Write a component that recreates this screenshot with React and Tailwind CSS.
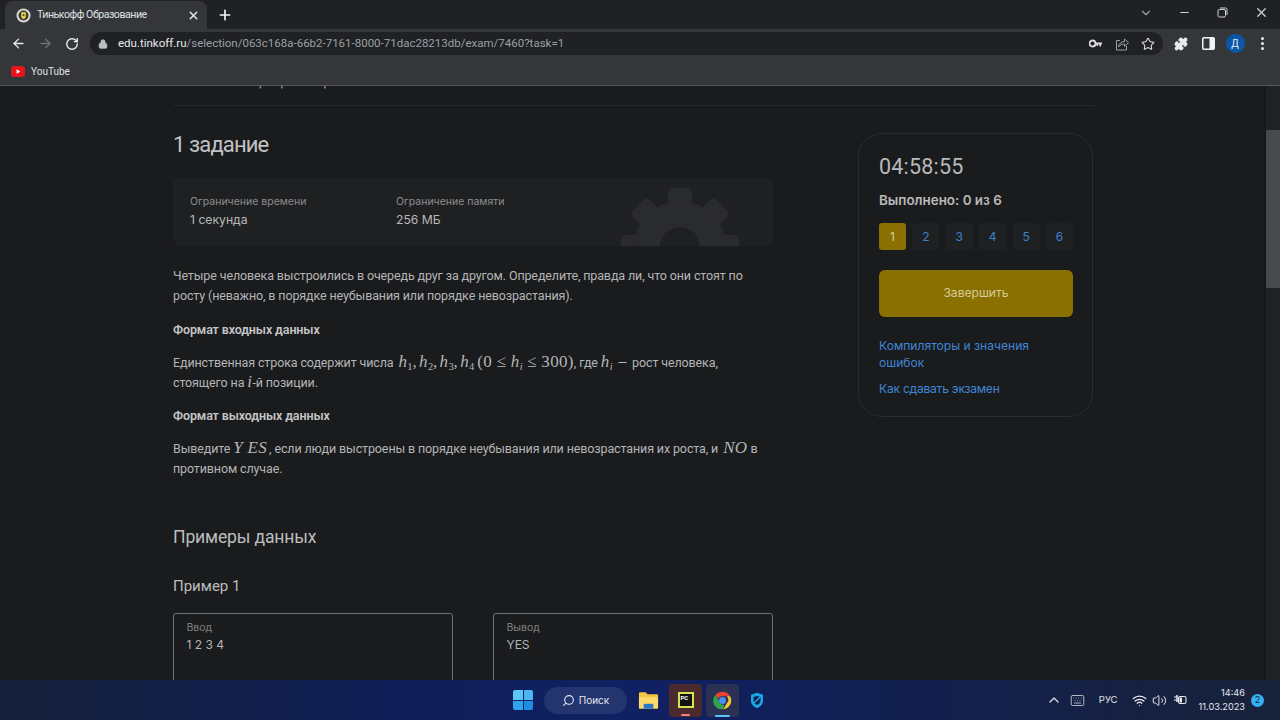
import React from "react";
import { ArrowLeft, ArrowRight, RotateCw, Lock, Star, Puzzle, ChevronDown, ChevronUp, Minus, X, Plus, Search, Keyboard, Wifi, Volume2 } from "lucide-react";

const M = ({ children }) => <span className="font-['Liberation_Serif',serif] italic text-[17px] leading-none tracking-[0.02em]">{children}</span>;
const R = ({ children }) => <span className="font-['Liberation_Serif',serif] text-[17px] leading-none tracking-[0.02em]">{children}</span>;
const S = ({ children }) => <sub className="font-['Liberation_Serif',serif] text-[10.5px] not-italic leading-none">{children}</sub>;
const Gap = () => <span className="inline-block w-[2px]" />;

function Favicon() {
  return (
    <svg width="15" height="15" viewBox="0 0 16 16" className="shrink-0">
      <circle cx="8" cy="8" r="7.5" fill="#d8d8d0" />
      <circle cx="8" cy="8" r="5.3" fill="#3a3a38" />
      <path d="M5.5 4.5h5v4.2c0 1.6-1.3 2.6-2.5 3-1.2-.4-2.5-1.4-2.5-3z" fill="#e8d44a" />
      <circle cx="8" cy="7.5" r="1.2" fill="#55503a" />
    </svg>
  );
}

function Tabs() {
  return (
    <div className="h-[29px] bg-[#202124] flex items-end text-[#bdc1c6]">
      <div className="ml-[5px] w-[202px] h-[28px] bg-[#35363a] rounded-t-[8px] flex items-center pl-[10.5px] pr-[7.5px] gap-[6.5px]">
        <Favicon />
        <span className="font-['Roboto',sans-serif] text-[10.6px] tracking-[-0.045em] text-[#dfe1e5] flex-1 whitespace-nowrap">Тинькофф Образование</span>
        <X size={13} strokeWidth={2.5} className="text-[#e8eaed]" />
      </div>
      <Plus size={16} strokeWidth={2.5} className="text-[#f1f3f4] ml-[9.5px] mb-[6px]" />
      <div className="flex-1" />
      <div className="flex items-center h-[25px] self-start">
        <ChevronDown size={14} className="mr-[24.5px] text-[#9aa0a6]" />
        <Minus size={13} className="mr-[26px] text-[#d0d2d5]" />
        <svg width="11" height="11" viewBox="0 0 11 11" fill="none" stroke="#d0d2d5" className="mr-[26px]"><rect x="1" y="2.5" width="7.5" height="7.5" rx="1.5" /><path d="M3 1h5.5A1.5 1.5 0 0 1 10 2.5V8" /></svg>
        <X size={15} className="mr-[11.5px] text-[#d0d2d5]" />
      </div>
    </div>
  );
}

function Toolbar() {
  return (
    <div className="h-[28px] pt-[1px] bg-[#35363a] flex items-center">
      <ArrowLeft size={15} strokeWidth={2.2} className="ml-[10.5px] text-[#e8eaed]" />
      <ArrowRight size={15} strokeWidth={2.2} className="ml-[12px] text-[#6f7276]" />
      <RotateCw size={14} strokeWidth={2.4} className="ml-[12px] text-[#e8eaed]" />
      <div className="ml-[11.5px] w-[1073px] h-[23px] bg-[#202124] rounded-full flex items-center pl-[7px] pr-[8px]">
        <Lock size={10} fill="#bdc1c6" className="text-[#bdc1c6] ml-[1px]" />
        <span className="ml-[10px] font-['Roboto',sans-serif] text-[11.5px] text-[#9aa0a6] whitespace-nowrap">
          <span className="text-[#e8eaed]">edu.tinkoff.ru</span>/selection/063c168a-66b2-7161-8000-71dac28213db/exam/7460?task=1
        </span>
        <div className="flex-1" />
        <svg width="13" height="9" viewBox="0 0 13 9" fill="#dadce0" className="mr-[13.5px]"><circle cx="3.5" cy="4.5" r="3" fill="none" stroke="#dadce0" strokeWidth="1.8" /><path d="M6 3.5h7v2h-1v2h-1.5v-2H9v1.5H7.5V5.5H6z" /></svg>
        <svg width="14" height="14" viewBox="0 0 14 14" fill="none" stroke="#9aa0a6" strokeWidth="1" className="mr-[12px]"><path d="M5 3.5H1.5v9.5h10V9" /><path d="M3.5 10c.3-3.5 3-5.5 6-5.5V2l4 3.7-4 3.7V7c-2.5 0-4.5.8-6 3z" /></svg>
        <Star size={14} strokeWidth={1.8} className="text-[#dadce0]" />
      </div>
      <Puzzle size={14} fill="#e8eaed" className="ml-[11px] text-[#e8eaed]" />
      <svg width="13" height="13" viewBox="0 0 13 13" className="ml-[13.5px]"><rect x="0.75" y="0.75" width="11.5" height="11.5" rx="1" fill="#35363a" stroke="#f1f3f4" strokeWidth="1.5" /><rect x="7.5" y="1" width="5" height="11" fill="#f1f3f4" /></svg>
      <div className="ml-[11px] w-[19px] h-[19px] rounded-full bg-[#0b57a8] flex items-center justify-center text-[#e8eaed] text-[10px] font-['Roboto',sans-serif]">Д</div>
      <div className="ml-[16px] flex flex-col gap-[2px]">
        <div className="w-[3px] h-[3px] rounded-full bg-[#e8eaed]" />
        <div className="w-[3px] h-[3px] rounded-full bg-[#e8eaed]" />
        <div className="w-[3px] h-[3px] rounded-full bg-[#e8eaed]" />
      </div>
    </div>
  );
}

function Bookmarks() {
  return (
    <div className="h-[29px] bg-[#35363a] border-b border-[#55565a] flex items-center pl-[11px] gap-[6px]">
      <svg width="14" height="11" viewBox="0 0 14 11"><rect width="14" height="11" rx="3" fill="#e8141c" /><path d="M5.6 3.2v4.6L9.4 5.5z" fill="#fff" /></svg>
      <span className="font-['Roboto',sans-serif] text-[10px] text-[#dfe1e5]">YouTube</span>
    </div>
  );
}

function Gear() {
  const angles = [0, 45, -45, 90, -90];
  return (
    <svg viewBox="0 0 120 60" width="120" height="60" className="absolute bottom-0 left-[447px]">
      <g fill="#2a2b2d">
        {angles.map((a) => (
          <rect key={a} x="48" y="2" width="24" height="30" rx="5" transform={`rotate(${a} 60 61)`} />
        ))}
        <circle cx="60" cy="61" r="46" />
      </g>
      <circle cx="60" cy="61" r="20" fill="#1f2022" />
    </svg>
  );
}

function Task() {
  return (
    <div className="w-[600px] shrink-0">
      <h1 className="mt-[24px] h-[30px] font-['Roboto',sans-serif] text-[22px] leading-[30px] text-[#c2c3c4] tracking-[-0.04em]">1 задание</h1>
      <div className="relative mt-[17px] h-[69px] bg-[#1f2022] rounded-[8px] overflow-hidden flex pl-[17px] pt-[16px] font-['Inter',sans-serif]">
        <div className="w-[206px]">
          <div className="text-[10.5px] leading-[18px] text-[#8c8d8e]">Ограничение времени</div>
          <div className="text-[12.2px] leading-[18px] text-[#b9babb]">1 секунда</div>
        </div>
        <div>
          <div className="text-[10.5px] leading-[18px] text-[#8c8d8e]">Ограничение памяти</div>
          <div className="text-[12.2px] leading-[18px] text-[#b9babb]">256 МБ</div>
        </div>
        <Gear />
      </div>
      <div className="mt-[20px] font-['Roboto',sans-serif] text-[12.5px] leading-[20px] text-[#b4b5b6] tracking-[-0.01em]">
        <p>Четыре человека выстроились в очередь друг за другом. Определите, правда ли, что они стоят по<br />росту (неважно, в порядке неубывания или порядке невозрастания).</p>
        <p className="mt-[14px] font-semibold text-[#c4c5c6]">Формат входных данных</p>
        <p className="mt-[13px]">Единственная строка содержит числа <Gap /><M>h</M><S>1</S><R>,</R><Gap /><M>h</M><S>2</S><R>,</R><Gap /><M>h</M><S>3</S><R>,</R><Gap /><M>h</M><S>4</S> <R>(0 ≤ </R><M>h</M><S><i>i</i></S><R> ≤ 300)</R>, где <M>h</M><S><i>i</i></S> <Gap />— <Gap />рост человека,<br />стоящего на <M>i</M>-й позиции.</p>
        <p className="mt-[13px] font-semibold text-[#c4c5c6]">Формат выходных данных</p>
        <p className="mt-[13px]">Выведите <M>Y ES</M><Gap />, если люди выстроены в порядке неубывания или невозрастания их роста, и <Gap /><M>NO</M> в<br />противном случае.</p>
      </div>
      <h2 className="mt-[45px] font-['Roboto',sans-serif] text-[17.6px] leading-[26px] text-[#bcbdbe] tracking-[-0.01em]">Примеры данных</h2>
      <h3 className="mt-[25px] font-['Roboto',sans-serif] text-[15px] leading-[22px] text-[#bcbdbe]">Пример 1</h3>
      <div className="mt-[16px] flex gap-[40px]">
        {[["Ввод", "1 2 3 4"], ["Вывод", "YES"]].map(([l, v]) => (
          <div key={l} className="w-[280px] h-[120px] border border-[#6f7072] rounded-[3px] pl-[12.5px] pt-[7px] font-['Inter',sans-serif]">
            <div className="text-[10.5px] leading-[14px] text-[#7f8081]">{l}</div>
            <div className="mt-[1px] text-[12px] leading-[18px] text-[#b4b5b6]">{v}</div>
          </div>
        ))}
      </div>
    </div>
  );
}

function Side() {
  return (
    <aside className="ml-[85px] mt-[27px] w-[235px] h-[284px] shrink-0 border border-[#2a2c2f] rounded-[24px] pl-[20px] pr-[19px] pt-[19px] font-['Inter',sans-serif]">
      <div className="font-['Roboto',sans-serif] text-[21.5px] leading-[28px] text-[#b8b9ba] tracking-[0.01em]">04:58:55</div>
      <div className="mt-[9px] text-[13.4px] leading-[20px] font-semibold text-[#b8b9ba]">Выполнено: 0 из 6</div>
      <div className="mt-[13px] flex gap-[6.4px]">
        {[1, 2, 3, 4, 5, 6].map((n) => (
          <div key={n} className={n === 1 ? "w-[27px] h-[27px] rounded-[3px] bg-[#8a7000] text-[#d8cf9f] text-[12px] flex items-center justify-center" : "w-[27px] h-[27px] rounded-[3px] bg-[#1f2022] text-[#3f7fd0] text-[12px] flex items-center justify-center"}>{n}</div>
        ))}
      </div>
      <div className="mt-[20px] h-[47px] rounded-[6px] bg-[#8a7000] flex items-center justify-center text-[12.1px] text-[#d6cc9a]">Завершить</div>
      <div className="mt-[21px] text-[12.1px] leading-[16.5px] text-[#3f86d6]">Компиляторы и значения<br />ошибок</div>
      <div className="mt-[10px] text-[12.1px] leading-[16.5px] tracking-[-0.02em] text-[#3f86d6]">Как сдавать экзамен</div>
    </aside>
  );
}

function Chrome() {
  return (
    <svg width="21" height="21" viewBox="0 0 48 48">
      <path d="M24 4a20 20 0 0 1 17.3 10H24a10 10 0 0 0-9.4 6.5L7.8 10.9A20 20 0 0 1 24 4z" fill="#e8432e" />
      <path d="M41.3 14A20 20 0 0 1 26 43.9l8.5-14.8A10 10 0 0 0 33.5 14z" fill="#fbc52d" />
      <path d="M26 43.9A20 20 0 0 1 7.8 10.9l8.5 14.8A10 10 0 0 0 28 33.4z" fill="#2fa14f" />
      <circle cx="24" cy="24" r="8" fill="#4a90f0" />
    </svg>
  );
}

function Taskbar() {
  return (
    <div className="h-[40px] bg-[linear-gradient(90deg,#15203a_0%,#101f57_30%,#102063_50%,#122050_70%,#18223a_100%)] flex items-center relative">
      <div className="ml-[513px] w-[20px] h-[20px] grid grid-cols-2 gap-[1px] shrink-0">
        <div className="bg-[#5cc6f8] rounded-tl-[2px]" /><div className="bg-[#4bb6f4] rounded-tr-[2px]" />
        <div className="bg-[#2ea5ee] rounded-bl-[2px]" /><div className="bg-[#1f8fe4] rounded-br-[2px]" />
      </div>
      <div className="ml-[11px] w-[83px] h-[27px] rounded-full bg-[#23346f] flex items-center justify-center gap-[4px] text-[#e6e8ee] font-['Inter',sans-serif] text-[10px]">
        <Search size={13} className="-scale-x-100" />Поиск
      </div>
      <svg width="21" height="20" viewBox="0 0 22 20" className="ml-[11px]">
        <path d="M1 3a1 1 0 0 1 1-1h6l2 2h10a1 1 0 0 1 1 1v13a1 1 0 0 1-1 1H2a1 1 0 0 1-1-1z" fill="#f4c542" />
        <path d="M1 7h20v11a1 1 0 0 1-1 1H2a1 1 0 0 1-1-1z" fill="#fbd96a" />
        <rect x="6" y="14" width="10" height="5" fill="#2878c8" />
      </svg>
      <div className="ml-[10px] relative w-[33px] h-[33px] rounded-[4px] bg-[#4a2a2c] flex items-center justify-center">
        <div className="w-[16px] h-[16px] bg-[#111] border-[2px] border-[#dbe04a] text-[#fff] text-[6px] leading-[7px] font-bold font-['Roboto',sans-serif] pl-[1px]">PC</div>
        <div className="absolute bottom-[1px] left-[12px] w-[9px] h-[2px] rounded bg-[#f0808a]" />
      </div>
      <div className="ml-[4px] relative w-[33px] h-[33px] rounded-[4px] bg-[#2a3153] flex items-center justify-center">
        <Chrome />
        <div className="absolute bottom-[0px] left-[9px] w-[15px] h-[2px] rounded bg-[#5cc6f8]" />
      </div>
      <svg width="14" height="17" viewBox="0 0 14 17" className="ml-[11px]">
        <path d="M7 .8l6 2v6c0 3.5-2.6 6-6 7.4-3.4-1.4-6-3.9-6-7.4v-6z" fill="#18a8e8" />
        <path d="M7 4l3.5 1v3.5c0 2-1.5 3.5-3.5 4.5-2-1-3.5-2.5-3.5-4.5V5z" fill="#102050" />
        <path d="M4 11l6-6" stroke="#18a8e8" strokeWidth="1.5" />
      </svg>
      <div className="flex-1" />
      <ChevronUp size={16} className="text-[#d8dae0] mr-[8.5px]" />
      <Keyboard size={15} strokeWidth={1.4} className="text-[#c8cad0] mr-[13.5px]" />
      <span className="font-['Inter',sans-serif] text-[9.5px] text-[#e0e2e8] mr-[14.5px]">РУС</span>
      <Wifi size={15} className="text-[#e8eaf0] mr-[5px]" />
      <Volume2 size={15} strokeWidth={1.6} className="text-[#e8eaf0] mr-[5.5px]" />
      <svg width="14" height="12" viewBox="0 0 14 12" fill="none" stroke="#e8eaf0" className="mr-[12px]">
        <path d="M1 3h3M1 6h3" strokeWidth="1.2" /><path d="M4 1v7" strokeWidth="1.5" />
        <rect x="5.5" y="2.5" width="7.5" height="7" rx="1.5" strokeWidth="1.1" /><rect x="6.5" y="3.5" width="2.5" height="5" fill="#e8eaf0" stroke="none" />
      </svg>
      <div className="text-right font-['Inter',sans-serif] text-[9.2px] leading-[14px] text-[#e6e8ee]">
        <div>14:46</div><div>11.03.2023</div>
      </div>
      <div className="ml-[6px] mr-[16px] w-[13px] h-[13px] rounded-full bg-[#35b0f0] text-[#0c1a40] text-[9px] flex items-center justify-center font-['Inter',sans-serif]">2</div>
    </div>
  );
}

export default function App() {
  return (
    <div className="w-[1280px] h-[720px] flex flex-col overflow-hidden bg-[#1a1b1d]">
      <Tabs />
      <Toolbar />
      <Bookmarks />
      <main className="flex-1 flex min-h-0 overflow-hidden">
        <div className="flex-1 pl-[173px] overflow-hidden">
          <div className="w-[921px] h-[20px] border-b border-[#26282a] overflow-hidden">
            <div className="-mt-[15.5px] font-['Inter',sans-serif] text-[13px] leading-[20px] text-[#a0a1a2]">Экзамен по программированию</div>
          </div>
          <div className="flex w-[921px]">
            <Task />
            <Side />
          </div>
        </div>
        <div className="w-[14px] shrink-0 bg-[#1f2325] pt-[44px] shadow-[-2px_0_3px_rgba(0,0,0,0.15)]">
          <div className="h-[158px] bg-[#464b4d]" />
        </div>
      </main>
      <Taskbar />
    </div>
  );
}
